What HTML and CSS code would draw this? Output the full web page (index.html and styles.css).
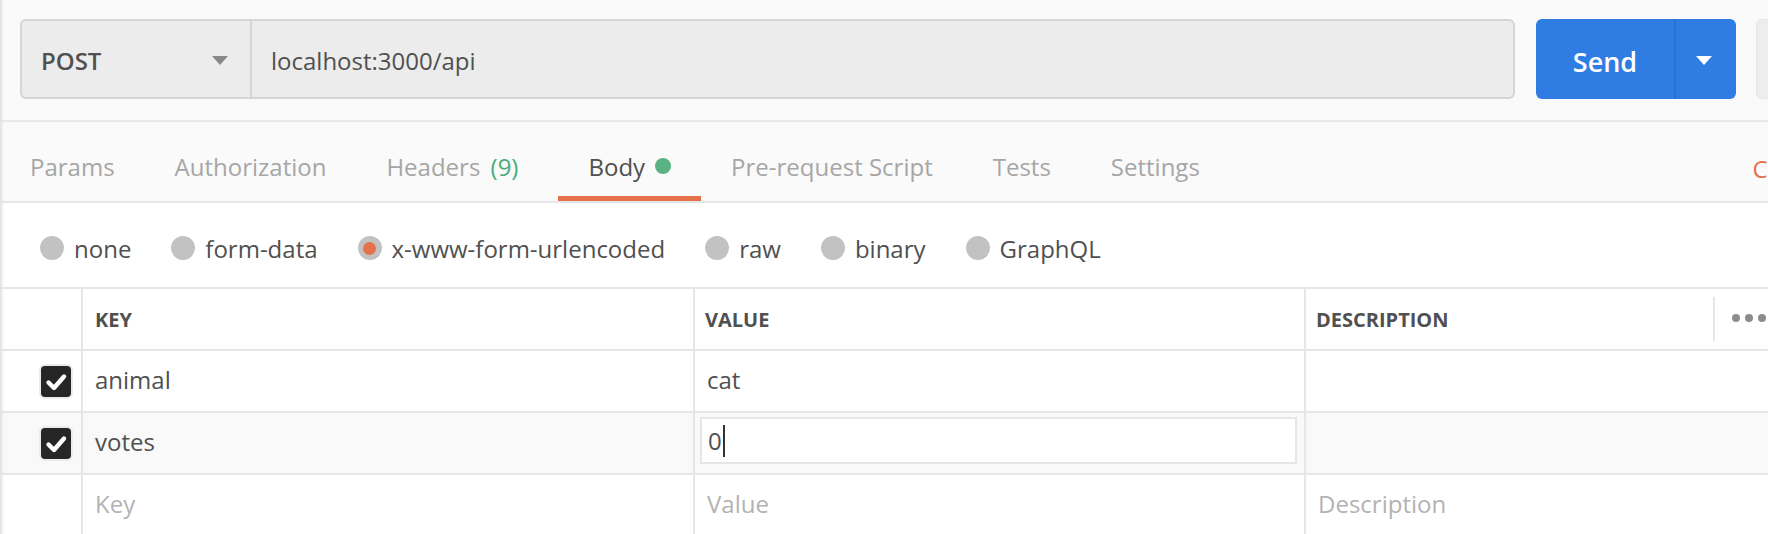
FILE: index.html
```html
<!DOCTYPE html>
<html lang="en">
<head>
<meta charset="utf-8">
<title>Request</title>
<link rel="stylesheet" href="styles.css">
</head>
<body>
<div class="app">
  <div class="request-bar">
    <div class="url-group">
      <div class="method">
        <span class="method-name">POST</span>
        <svg class="caret" width="16" height="9" viewBox="0 0 16 9"><path d="M0 0 H16 L8 9 Z" fill="#888"/></svg>
      </div>
      <div class="url">localhost:3000/api</div>
    </div>
    <div class="send">
      <span class="send-label">Send</span>
      <span class="send-more"><svg width="16" height="9" viewBox="0 0 16 9"><path d="M0 0 H16 L8 9 Z" fill="#fff"/></svg></span>
    </div>
    <div class="save"></div>
  </div>

  <div class="tabs">
    <div class="tab">Params</div>
    <div class="tab">Authorization</div>
    <div class="tab">Headers <span class="count">(9)</span></div>
    <div class="tab active">Body<span class="dot"></span></div>
    <div class="tab">Pre-request Script</div>
    <div class="tab">Tests</div>
    <div class="tab">Settings</div>
    <div class="cookies">Cookies</div>
  </div>

  <div class="body-types">
    <label class="radio"><span class="circle"></span>none</label>
    <label class="radio"><span class="circle"></span>form-data</label>
    <label class="radio"><span class="circle on"></span>x-www-form-urlencoded</label>
    <label class="radio"><span class="circle"></span>raw</label>
    <label class="radio"><span class="circle"></span>binary</label>
    <label class="radio"><span class="circle"></span>GraphQL</label>
  </div>

  <div class="kv-table">
    <div class="kv-row head">
      <div class="kv-cell check-col"></div>
      <div class="kv-cell key-head">KEY</div>
      <div class="kv-cell">VALUE</div>
      <div class="kv-cell desc-head">
        <span class="desc-label">DESCRIPTION</span>
        <span class="sep"></span>
        <span class="dots"><i></i><i></i><i></i></span>
      </div>
    </div>
    <div class="kv-row">
      <div class="kv-cell check-col"><span class="checkbox"><svg width="30" height="31" viewBox="0 0 30 31"><path d="M7.5 16.5 L13 22 L23 10.5" fill="none" stroke="#fff" stroke-width="4.4" stroke-linecap="round" stroke-linejoin="round"/></svg></span></div>
      <div class="kv-cell">animal</div>
      <div class="kv-cell">cat</div>
      <div class="kv-cell"></div>
    </div>
    <div class="kv-row hover">
      <div class="kv-cell check-col"><span class="checkbox"><svg width="30" height="31" viewBox="0 0 30 31"><path d="M7.5 16.5 L13 22 L23 10.5" fill="none" stroke="#fff" stroke-width="4.4" stroke-linecap="round" stroke-linejoin="round"/></svg></span></div>
      <div class="kv-cell">votes</div>
      <div class="kv-cell editing"><div class="input">0<span class="text-caret"></span></div></div>
      <div class="kv-cell"></div>
    </div>
    <div class="kv-row">
      <div class="kv-cell check-col"></div>
      <div class="kv-cell placeholder">Key</div>
      <div class="kv-cell placeholder">Value</div>
      <div class="kv-cell placeholder">Description</div>
    </div>
  </div>
</div>
</body>
</html>
```

FILE: styles.css
```css
* { box-sizing: border-box; }
html, body { margin: 0; padding: 0; }
body {
  width: 1768px;
  height: 534px;
  overflow: hidden;
  background: #ffffff;
  font-family: "Open Sans", "Noto Sans", sans-serif;
  color: #505050;
}
.app {
  width: 1920px;
  position: relative;
}
.app::before {
  content: "";
  position: absolute;
  left: 0; top: 0;
  width: 4px;
  height: 534px;
  background: linear-gradient(to right, #e0e0e0, rgba(240,240,240,0));
  z-index: 5;
}

/* request bar */
.request-bar {
  height: 122px;
  padding: 19px 0 0 20px;
  background: #fafafa;
  border-bottom: 2px solid #e8e8e8;
  display: flex;
  align-items: flex-start;
}
.request-bar > * {
  flex: none;
}
.url-group {
  width: 1495px;
  height: 80px;
  display: flex;
  background: #ececec;
  border: 2px solid #d5d5d5;
  border-radius: 6px;
}
.method {
  width: 230px;
  flex: none;
  display: flex;
  align-items: center;
  justify-content: space-between;
  padding: 3px 22px 0 19px;
  border-right: 2px solid #d5d5d5;
}
.method-name {
  font-size: 24px;
  font-weight: 600;
  color: #505050;
}
.url {
  display: flex;
  align-items: center;
  padding: 3px 0 0 19px;
  font-size: 24px;
  color: #505050;
}
.send {
  margin-left: 21px;
  width: 200px;
  height: 80px;
  display: flex;
  background: #2f7de3;
  border-radius: 6px;
  color: #fff;
}
.send-label {
  width: 140px;
  display: flex;
  align-items: center;
  justify-content: center;
  padding-top: 4px;
  font-size: 27px;
  font-weight: 600;
  border-right: 2px solid #2a71d2;
}
.send-more {
  flex: 1;
  display: flex;
  align-items: center;
  justify-content: center;
  padding: 2px 4px 0 0;
}
.save {
  margin-left: 20px;
  width: 150px;
  height: 80px;
  background: #ededed;
  border: 1px solid #e6e6e6;
  border-radius: 6px;
}

/* tabs */
.tabs {
  height: 81px;
  display: flex;
  background: #fafafa;
  border-bottom: 2px solid #e6e6e6;
  padding-right: 80px;
}
.tab {
  height: 79px;
  padding: 14px 30px 0;
  display: flex;
  align-items: center;
  border-bottom: 5px solid transparent;
  font-size: 24px;
  color: #a6a6a6;
  white-space: pre;
}
.tab .count {
  color: #47ad7c;
  margin: 0 10px 0 4px;
}
.tab.active {
  color: #505050;
  border-bottom-color: #e5714a;
}
.dot {
  width: 16px;
  height: 16px;
  margin-left: 10px;
  border-radius: 50%;
  background: #58b283;
}
.cookies {
  margin-left: auto;
  padding-top: 14px;
  display: flex;
  align-items: center;
  font-size: 24px;
  color: #e5714a;
}

/* body type radios */
.body-types {
  height: 84px;
  padding: 6px 0 0 40px;
  display: flex;
  align-items: center;
  gap: 40px;
}
.radio {
  display: flex;
  align-items: center;
  gap: 10px;
  font-size: 24px;
  color: #505050;
}
.circle {
  width: 24px;
  height: 24px;
  border-radius: 50%;
  background: #c2c2c2;
  display: flex;
  align-items: center;
  justify-content: center;
}
.circle.on::after {
  content: "";
  width: 13px;
  height: 13px;
  border-radius: 50%;
  background: #e5714a;
}

/* key-value table */
.kv-table {
  border-top: 2px solid #e6e6e6;
}
.kv-row {
  display: grid;
  grid-template-columns: 83px 612px 611px 1fr;
  height: 62px;
  border-bottom: 2px solid #e6e6e6;
}
.kv-row.hover {
  background: #f9f9f9;
}
.kv-cell {
  display: flex;
  align-items: center;
  padding: 0 12px 4px;
  border-right: 2px solid #e6e6e6;
  font-size: 24px;
  color: #505050;
}
.kv-cell:last-child {
  border-right: none;
}
.head .kv-cell {
  padding: 0 10px;
  font-size: 20px;
  font-weight: 700;
  color: #505050;
}
.head .key-head {
  padding-left: 12px;
}
.kv-cell.check-col {
  justify-content: flex-end;
  padding: 0 8px 0 0;
}
.checkbox {
  width: 34px;
  height: 35px;
  border: 2px solid #ebebeb;
  border-radius: 6px;
  background: #262626;
  display: flex;
  align-items: center;
  justify-content: center;
}
.kv-cell.editing {
  padding: 4px 7px 9px 5px;
  align-items: stretch;
}
.input {
  flex: 1;
  display: flex;
  align-items: center;
  padding-left: 6px;
  background: #fff;
  border: 2px solid #e6e6e6;
}
.text-caret {
  width: 2px;
  height: 32px;
  margin-left: 1px;
  background: #333;
}
.placeholder {
  color: #b3b3b3;
}
.head .desc-head {
  padding: 0 0 0 10px;
}
.desc-label {
  width: 397px;
  flex: none;
}
.sep {
  width: 2px;
  height: 44px;
  background: #e6e6e6;
  flex: none;
}
.dots {
  display: flex;
  gap: 5px;
  margin-left: 17px;
  margin-top: -3px;
}
.dots i {
  width: 8px;
  height: 8px;
  border-radius: 50%;
  background: #8c8c8c;
}
```
